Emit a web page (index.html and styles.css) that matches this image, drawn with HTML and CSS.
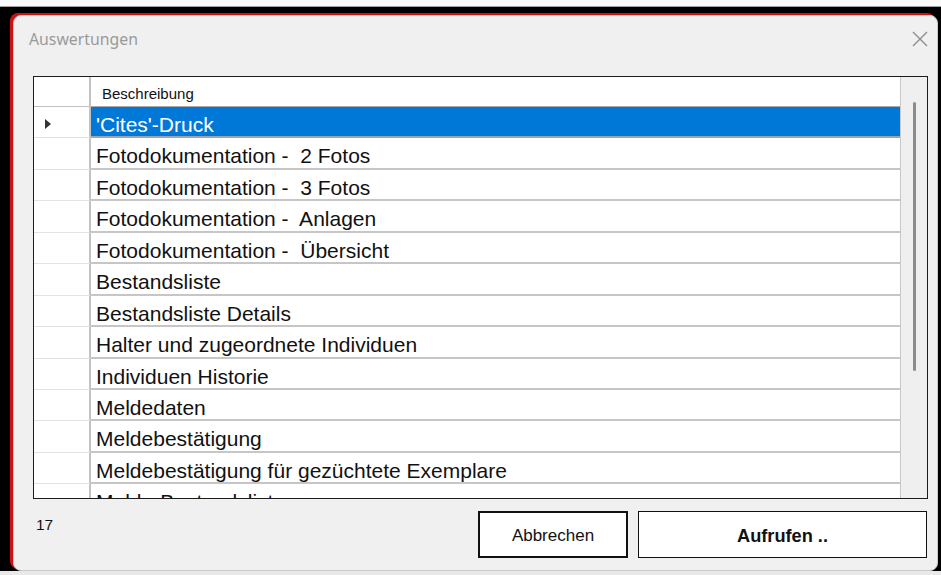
FILE: index.html
```html
<!DOCTYPE html>
<html lang="de">
<head>
<meta charset="utf-8">
<title>Auswertungen</title>
<link rel="stylesheet" href="styles.css">
</head>
<body>
<div class="topstrip"></div>
<div class="backdrop">
  <div class="dialog">
    <div class="titlebar">
      <span class="title">Auswertungen</span>
      <svg class="close" width="16" height="16" viewBox="0 0 16 16"><path d="M1 1 L15 15 M15 1 L1 15" stroke="#8a8a8a" stroke-width="1.3" fill="none"/></svg>
    </div>
    <div class="content">
      <div class="grid">
        <div class="grid-main">
          <div class="row head"><div class="rh"></div><div class="cell">Beschreibung</div></div>
          <div class="row selected"><div class="rh"><span class="arrow"></span></div><div class="cell">'Cites'-Druck</div></div>
          <div class="row"><div class="rh"></div><div class="cell">Fotodokumentation -&nbsp; 2 Fotos</div></div>
          <div class="row"><div class="rh"></div><div class="cell">Fotodokumentation -&nbsp; 3 Fotos</div></div>
          <div class="row"><div class="rh"></div><div class="cell">Fotodokumentation -&nbsp; Anlagen</div></div>
          <div class="row"><div class="rh"></div><div class="cell">Fotodokumentation -&nbsp; Übersicht</div></div>
          <div class="row"><div class="rh"></div><div class="cell">Bestandsliste</div></div>
          <div class="row"><div class="rh"></div><div class="cell">Bestandsliste Details</div></div>
          <div class="row"><div class="rh"></div><div class="cell">Halter und zugeordnete Individuen</div></div>
          <div class="row"><div class="rh"></div><div class="cell">Individuen Historie</div></div>
          <div class="row"><div class="rh"></div><div class="cell">Meldedaten</div></div>
          <div class="row"><div class="rh"></div><div class="cell">Meldebestätigung</div></div>
          <div class="row"><div class="rh"></div><div class="cell">Meldebestätigung für gezüchtete Exemplare</div></div>
          <div class="row"><div class="rh"></div><div class="cell">Melde-Bestandsliste</div></div>
        </div>
        <div class="vscroll"><div class="thumb"></div></div>
      </div>
      <div class="footer">
        <span class="count">17</span>
        <button class="btn default">Abbrechen</button>
        <button class="btn primary">Aufrufen ..</button>
      </div>
    </div>
  </div>
</div>
<div class="bottomstrip"></div>
</body>
</html>
```

FILE: styles.css
```css
html, body {
  margin: 0;
  padding: 0;
  width: 941px;
  height: 575px;
  overflow: hidden;
  background: #000;
  font-family: "Liberation Sans", Arial, sans-serif;
}

.topstrip {
  height: 6px;
  background: #fafafa;
  border-bottom: 1px solid #a0a0a0;
}

.backdrop {
  height: 564px;
  padding: 8px 0 0 10px;
  box-sizing: border-box;
  background: #000;
  display: flex;
  flex-direction: column;
}

.dialog {
  margin-left: 3px;
  width: 925px;
  height: 556px;
  box-sizing: border-box;
  background: #f0f0f0;
  border: 1px solid #c9c9c9;
  border-radius: 8px;
  box-shadow: -3px -2px 0 0 #c81414;
  display: flex;
  flex-direction: column;
}

.titlebar {
  height: 45px;
  flex: none;
  display: flex;
  align-items: center;
  justify-content: space-between;
  padding: 0 9px 0 15px;
}

.title {
  font-family: "Segoe UI", "Noto Sans", sans-serif;
  font-size: 15.8px;
  color: #9a9a9a;
  margin-top: 1px;
}

.content {
  padding: 15px 10px 0 19px;
  display: flex;
  flex-direction: column;
}

.grid {
  height: 423px;
  width: 895px;
  box-sizing: border-box;
  border: 1px solid #1c1c1c;
  background: #fff;
  display: flex;
  overflow: hidden;
}

.grid-main {
  flex: 1;
  display: flex;
  flex-direction: column;
  overflow: hidden;
  border-right: 1px solid #c8c8c8;
}

.row {
  display: flex;
  flex: none;
  height: 31.45px;
  box-sizing: border-box;
}

.row .rh {
  width: 57px;
  flex: none;
  border-right: 2px solid #c2c2c2;
  border-bottom: 1px solid #e3e3e3;
  position: relative;
  box-sizing: border-box;
}

.row .cell {
  flex: 1;
  font-size: 21px;
  color: #111;
  padding: 6px 0 0 5px;
  border-bottom: 2px solid #c6c6c6;
  white-space: nowrap;
  overflow: hidden;
  box-sizing: border-box;
}

.row.head {
  height: 30px;
}

.row.head .rh {
  border-bottom: 1px solid #c2c2c2;
}

.row.head .cell {
  font-size: 15px;
  padding: 8px 0 0 11px;
  border-bottom: 1px solid #a9a9a9;
}

.row.selected .cell {
  background: #0078d7;
  color: #fff;
  border-bottom: 2px solid #9aa7b3;
}

.arrow {
  position: absolute;
  left: 11px;
  top: 12px;
  width: 0;
  height: 0;
  border-top: 5px solid transparent;
  border-bottom: 5px solid transparent;
  border-left: 6px solid #333;
}

.vscroll {
  width: 26px;
  flex: none;
  background: #efefef;
  position: relative;
}

.thumb {
  position: absolute;
  left: 12px;
  top: 25px;
  width: 3px;
  height: 269px;
  border-radius: 2px;
  background: #8c8c8c;
}

.footer {
  display: flex;
  align-items: flex-start;
  padding-top: 12px;
}

.count {
  font-size: 15.5px;
  color: #111;
  margin: 5px 0 0 3px;
  width: 442px;
}

.btn {
  height: 47px;
  box-sizing: border-box;
  background: #fff;
  font-family: "Liberation Sans", Arial, sans-serif;
  font-size: 17px;
  color: #111;
  padding: 3px 0 0;
  margin: 0;
}

.btn.default {
  width: 150px;
  border: 2px solid #111;
}

.btn.primary {
  width: 289px;
  margin-left: 10px;
  border: 1px solid #111;
  font-weight: bold;
  font-size: 18.2px;
}

.bottomstrip {
  height: 4px;
  background: #e9e9e9;
}
```
